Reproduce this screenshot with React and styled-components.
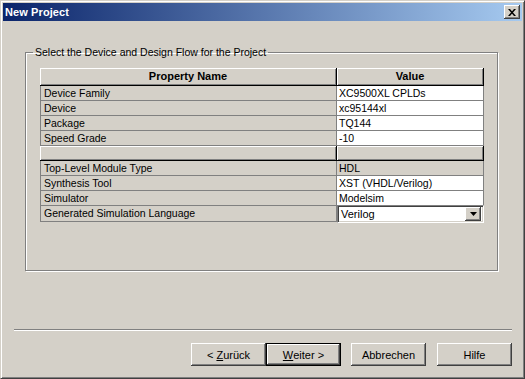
import React from 'react';
import styled, { createGlobalStyle } from 'styled-components';

const GlobalStyle = createGlobalStyle`
  html, body {
    margin: 0;
    padding: 0;
    background: #d4d0c8;
  }
  body {
    font-family: "Liberation Sans", Arial, sans-serif;
    font-size: 10.5px;
    color: #000;
  }
`;

const Window = styled.div`
  width: 525px;
  height: 379px;
  box-sizing: border-box;
  display: flex;
  flex-direction: column;
  background: #d4d0c8;
  border: 1px solid;
  border-color: #d4d0c8 #404040 #404040 #d4d0c8;
  box-shadow: inset 1px 1px 0 #fff, inset -1px -1px 0 #808080;
  padding: 2px;
`;

const TitleBar = styled.div`
  height: 18px;
  display: flex;
  align-items: center;
  justify-content: space-between;
  padding: 0 2px 0 2px;
  background: linear-gradient(to right, #0a246a, #a6caf0);
`;

const Title = styled.span`
  color: #fff;
  font-weight: bold;
  font-size: 11px;
  letter-spacing: 0.1px;
`;

const CloseButton = styled.div`
  width: 16px;
  height: 14px;
  box-sizing: border-box;
  display: flex;
  align-items: center;
  justify-content: center;
  background: #d4d0c8;
  box-shadow: inset -1px -1px 0 #404040, inset 1px 1px 0 #fff,
    inset -2px -2px 0 #808080;
`;

const Body = styled.div`
  flex: 1;
  display: flex;
  flex-direction: column;
  padding: 25px 0 0 0;
`;

const GroupBox = styled.fieldset`
  margin: 0 24px 0 22px;
  height: 225px;
  box-sizing: border-box;
  padding: 9px 0 0 14px;
  border: 1px solid #808080;
  box-shadow: 1px 1px 0 #fff, inset 1px 1px 0 #fff;
`;

const GroupLabel = styled.legend`
  margin-left: -7px;
  padding: 0 2px;
  font-size: 10.5px;
  line-height: 13px;
`;

const Grid = styled.div`
  display: grid;
  grid-template-columns: 297px 147px;
  width: 444px;
`;

const HeadCell = styled.div`
  height: ${p => (p.$short ? '15px' : '18px')};
  box-sizing: border-box;
  background: #d4d0c8;
  border-right: 1px solid #000;
  border-bottom: 1px solid #000;
  box-shadow: inset 1px 1px 0 #fff, inset -1px -1px 0 #808080;
  font-weight: bold;
  font-size: 11px;
  line-height: 17px;
  text-align: center;
`;

const PropCell = styled.div`
  height: ${p => (p.$tall ? '16px' : '15px')};
  box-sizing: border-box;
  background: #d4d0c8;
  border-left: 1px solid #808080;
  border-right: 1px solid #808080;
  border-bottom: 1px solid #808080;
  padding-left: 3px;
  line-height: 14px;
  white-space: nowrap;
`;

const ValueCell = styled.div`
  height: ${p => (p.$tall ? '16px' : '15px')};
  box-sizing: border-box;
  background: ${p => (p.$readOnly ? '#d4d0c8' : '#fff')};
  border-right: 1px solid #808080;
  border-bottom: 1px solid #808080;
  padding-left: 2px;
  line-height: 14px;
  white-space: nowrap;
`;

const ComboCell = styled.div`
  height: 16px;
  position: relative;
`;

const Combo = styled.div`
  position: absolute;
  left: 0;
  right: 0;
  top: -1px;
  height: 18px;
  box-sizing: border-box;
  display: flex;
  align-items: center;
  justify-content: space-between;
  background: #fff;
  border: 1px solid;
  border-color: #808080 #fff #fff #808080;
  box-shadow: inset 1px 1px 0 #404040, inset -1px -1px 0 #d4d0c8;
  padding: 2px 2px 2px 3px;
  font-size: 11px;
`;

const DropButton = styled.div`
  width: 16px;
  height: 14px;
  box-sizing: border-box;
  display: flex;
  align-items: center;
  justify-content: center;
  background: #d4d0c8;
  box-shadow: inset -1px -1px 0 #404040, inset 1px 1px 0 #fff,
    inset -2px -2px 0 #808080;
`;

const Separator = styled.div`
  margin: 58px 10px 0 11px;
  height: 0;
  border-top: 1px solid #808080;
  border-bottom: 1px solid #fff;
`;

const ButtonRow = styled.div`
  display: flex;
  justify-content: flex-end;
  margin: 12px 10px 0 0;
`;

const Button = styled.div`
  width: 75px;
  height: 23px;
  box-sizing: border-box;
  display: flex;
  align-items: center;
  justify-content: center;
  margin-left: ${p => p.$gap || 0}px;
  background: #d4d0c8;
  border: ${p => (p.$default ? '1px solid #000' : 'none')};
  box-shadow: inset -1px -1px 0 #404040, inset 1px 1px 0 #fff,
    inset -2px -2px 0 #808080;
  font-size: 11px;

  u {
    text-decoration: underline;
  }
`;

const rows = [
  { name: 'Device Family', value: 'XC9500XL CPLDs' },
  { name: 'Device', value: 'xc95144xl' },
  { name: 'Package', value: 'TQ144' },
  { name: 'Speed Grade', value: '-10' },
];

const flowRows = [
  { name: 'Top-Level Module Type', value: 'HDL', readOnly: true },
  { name: 'Synthesis Tool', value: 'XST (VHDL/Verilog)' },
  { name: 'Simulator', value: 'Modelsim' },
];

const CloseGlyph = () => (
  <svg width="8" height="7" viewBox="0 0 8 7">
    <path d="M0 0 L2 0 L8 7 L6 7 Z M6 0 L8 0 L2 7 L0 7 Z" fill="#000" />
  </svg>
);

const Arrow = () => (
  <svg width="7" height="4" viewBox="0 0 7 4">
    <path d="M0 0 H7 L3.5 4 Z" fill="#000" />
  </svg>
);

const App = () => {
  return (
    <>
      <GlobalStyle />
      <Window>
        <TitleBar>
          <Title>New Project</Title>
          <CloseButton>
            <CloseGlyph />
          </CloseButton>
        </TitleBar>
        <Body>
          <GroupBox>
            <GroupLabel>Select the Device and Design Flow for the Project</GroupLabel>
            <Grid>
              <HeadCell>Property Name</HeadCell>
              <HeadCell>Value</HeadCell>
              {rows.map(r => (
                <React.Fragment key={r.name}>
                  <PropCell>{r.name}</PropCell>
                  <ValueCell>{r.value}</ValueCell>
                </React.Fragment>
              ))}
              <HeadCell $short />
              <HeadCell $short />
              {flowRows.map(r => (
                <React.Fragment key={r.name}>
                  <PropCell>{r.name}</PropCell>
                  <ValueCell $readOnly={r.readOnly}>{r.value}</ValueCell>
                </React.Fragment>
              ))}
              <PropCell $tall>Generated Simulation Language</PropCell>
              <ComboCell>
                <Combo>
                  <span>Verilog</span>
                  <DropButton>
                    <Arrow />
                  </DropButton>
                </Combo>
              </ComboCell>
            </Grid>
          </GroupBox>
          <Separator />
          <ButtonRow>
            <Button>
              &lt;&nbsp;<u>Z</u>urück
            </Button>
            <Button $default>
              <u>W</u>eiter &gt;
            </Button>
            <Button $gap={10}>Abbrechen</Button>
            <Button $gap={11}>Hilfe</Button>
          </ButtonRow>
        </Body>
      </Window>
    </>
  );
};

export default App;
